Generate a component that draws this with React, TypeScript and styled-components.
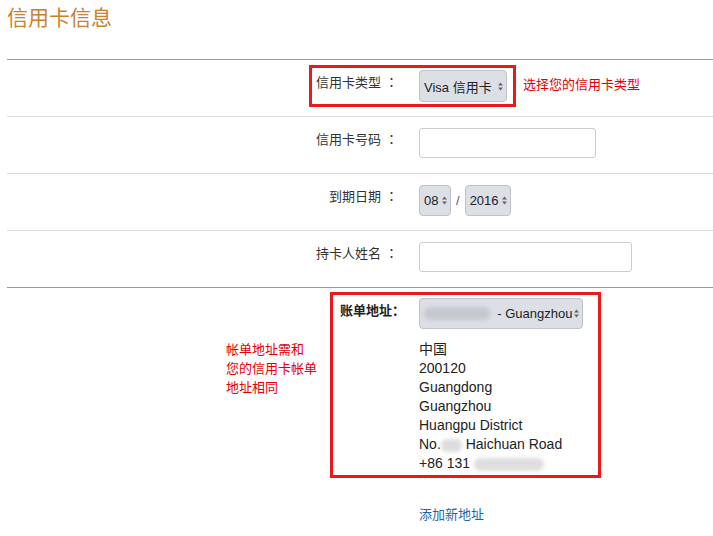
import styled, { createGlobalStyle } from "styled-components";

const GlobalStyle = createGlobalStyle`
  body {
    margin: 0;
    background: #fff;
    color: #333;
    font-family: "Liberation Sans", "Noto Sans CJK SC", sans-serif;
    font-size: 13px;
  }
`

const Page = styled.div`
  padding: 3px 0 20px 7px;
`

const Title = styled.h2`
  margin: 0;
  font-size: 21px;
  line-height: 29px;
  font-weight: normal;
  color: #c8822f;
`

const Form = styled.div`
  margin-top: 27px;
  border-top: 1px solid #999;
`

interface RowProps {
  $last?: boolean;
}

const Row = styled.div<RowProps>`
  display: flex;
  align-items: flex-start;
  height: 57px;
  box-sizing: border-box;
  padding: 5px 0 0 302px;
  border-bottom: 1px solid ${(props) => (props.$last ? "#999" : "#ddd")};
`

interface FieldProps {
  $highlight?: boolean;
}

const Field = styled.div<FieldProps>`
  display: flex;
  align-items: flex-start;
  border: 3px solid ${(props) => (props.$highlight ? "#e81a1a" : "transparent")};
  padding: 2px 6px 2px 4px;
`

const Label = styled.div`
  width: 82px;
  margin-right: 21px;
  padding-top: 2px;
  line-height: 19px;
  text-align: right;
  white-space: nowrap;
`

// full-width colon with its dots centred, as on the original page
const Colon = styled.span`
  margin-left: 4px;
  font-family: "Noto Sans CJK TC", sans-serif;
`

const Control = styled.div`
  display: flex;
  align-items: center;
  min-height: 32px;
`

const Hint = styled.div`
  margin: 10px 0 0 7px;
  line-height: 19px;
  color: #e60000;
`

interface SelectProps {
  $w: number;
  $h?: number;
}

const Select = styled.div<SelectProps>`
  display: flex;
  align-items: center;
  justify-content: space-between;
  box-sizing: border-box;
  width: ${(props) => props.$w}px;
  height: ${(props) => props.$h ?? 32}px;
  padding: 0 3px 0 4px;
  background: #dcdfe5;
  border: 1px solid #bcc1ca;
  border-radius: 4px;
  color: #222;
  white-space: nowrap;
`

const SelectText = styled.span`
  display: flex;
  align-items: center;
`

interface InputProps {
  $w: number;
}

const Input = styled.input<InputProps>`
  box-sizing: border-box;
  width: ${(props) => props.$w}px;
  height: 30px;
  border: 1px solid #ccc;
  border-radius: 3px;
  background: #fff;
  padding: 0 6px;
  outline: none;
`

const Slash = styled.span`
  margin: 0 5px;
  color: #555;
`

const Billing = styled.div`
  display: flex;
  align-items: flex-start;
  padding: 4px 0 0 219px;
`

const Note = styled.div`
  width: 104px;
  margin-top: 48px;
  line-height: 19px;
  color: #e60000;
`

const BillingBox = styled.div`
  box-sizing: border-box;
  width: 271px;
  border: 3px solid #e81a1a;
  padding: 3px 15px 2px 7px;
`

const BillingHead = styled.div`
  display: flex;
  align-items: flex-start;
`

const BoldLabel = styled.div`
  width: 79px;
  padding-top: 3px;
  line-height: 19px;
  font-weight: bold;
  color: #222;
`

const Address = styled.div`
  margin: 11px 0 0 79px;
  font-size: 14px;
  line-height: 19px;
  color: #222;
`

interface BlurProps {
  $w: number;
  $tone: string;
}

const Blur = styled.span<BlurProps>`
  display: inline-block;
  vertical-align: middle;
  width: ${(props) => props.$w}px;
  height: 13px;
  border-radius: 6px;
  background: ${(props) => props.$tone};
  filter: blur(2px);
`

const LinkRow = styled.div`
  margin-top: 27px;
  padding-left: 412px;
  line-height: 19px;
`

const AddLink = styled.a`
  color: #1a66ad;
  text-decoration: none;
`

const Arrows = () => (
  <svg width="5" height="9" viewBox="0 0 5 9">
    <polygon points="0,3.6 2.5,0.6 5,3.6" fill="#666" />
    <polygon points="0,5.4 2.5,8.4 5,5.4" fill="#666" />
  </svg>
)

const App = () => {
  return (
    <>
      <GlobalStyle />
      <Page>
        <Title>信用卡信息</Title>
        <Form>
          <Row>
            <Field $highlight>
              <Label>信用卡类型<Colon>：</Colon></Label>
              <Control>
                <Select $w={88}>
                  <SelectText>Visa 信用卡</SelectText>
                  <Arrows />
                </Select>
              </Control>
            </Field>
            <Hint>选择您的信用卡类型</Hint>
          </Row>
          <Row>
            <Field>
              <Label>信用卡号码<Colon>：</Colon></Label>
              <Control>
                <Input $w={177} />
              </Control>
            </Field>
          </Row>
          <Row>
            <Field>
              <Label>到期日期<Colon>：</Colon></Label>
              <Control>
                <Select $w={32} $h={31}>
                  <SelectText>08</SelectText>
                  <Arrows />
                </Select>
                <Slash>/</Slash>
                <Select $w={46} $h={31}>
                  <SelectText>2016</SelectText>
                  <Arrows />
                </Select>
              </Control>
            </Field>
          </Row>
          <Row $last>
            <Field>
              <Label>持卡人姓名<Colon>：</Colon></Label>
              <Control>
                <Input $w={213} />
              </Control>
            </Field>
          </Row>
          <Billing>
            <Note>
              帐单地址需和<br />
              您的信用卡帐单<br />
              地址相同
            </Note>
            <BillingBox>
              <BillingHead>
                <BoldLabel>账单地址：</BoldLabel>
                <Select $w={164} $h={31}>
                  <SelectText>
                    <Blur $w={66} $tone="#c5c8cd" />
                    &nbsp;&nbsp;- Guangzhou
                  </SelectText>
                  <Arrows />
                </Select>
              </BillingHead>
              <Address>
                中国<br />
                200120<br />
                Guangdong<br />
                Guangzhou<br />
                Huangpu District<br />
                No.<Blur $w={21} $tone="#dcdcdc" /> Haichuan Road<br />
                +86 131 <Blur $w={70} $tone="#dedede" />
              </Address>
            </BillingBox>
          </Billing>
          <LinkRow>
            <AddLink href="#">添加新地址</AddLink>
          </LinkRow>
        </Form>
      </Page>
    </>
  )
}

export default App
